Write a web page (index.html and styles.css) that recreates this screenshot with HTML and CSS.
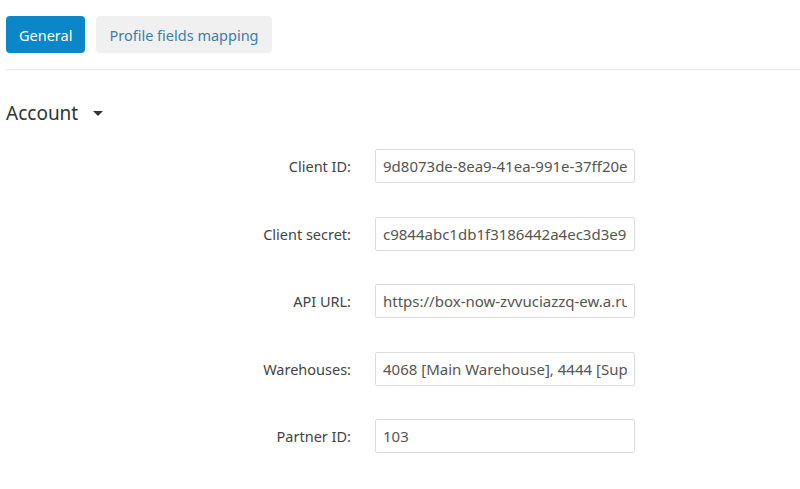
FILE: index.html
```html
<!DOCTYPE html>
<html>
<head>
<meta charset="utf-8">
<link rel="stylesheet" href="styles.css">
</head>
<body>
<div class="page">
  <div class="tabs">
    <button class="tab tab-active">General</button>
    <button class="tab">Profile fields mapping</button>
  </div>
  <div class="section-title">
    <span>Account</span>
    <span class="caret"></span>
  </div>
  <form class="form">
    <div class="row">
      <label class="label">Client ID:</label>
      <input class="input" type="text" value="9d8073de-8ea9-41ea-991e-37ff20e4b2a1">
    </div>
    <div class="row">
      <label class="label">Client secret:</label>
      <input class="input" type="text" value="c9844abc1db1f3186442a4ec3d3e95a7">
    </div>
    <div class="row">
      <label class="label">API URL:</label>
      <input class="input" type="text" value="https://box-now-zvvuciazzq-ew.a.run.app">
    </div>
    <div class="row">
      <label class="label">Warehouses:</label>
      <input class="input" type="text" value="4068 [Main Warehouse], 4444 [Support]">
    </div>
    <div class="row">
      <label class="label">Partner ID:</label>
      <input class="input" type="text" value="103">
    </div>
  </form>
</div>
</body>
</html>
```

FILE: styles.css
```css
html, body {
  margin: 0;
  padding: 0;
  background: #ffffff;
}
body {
  font-family: "Noto Sans", "Open Sans", sans-serif;
  color: #333333;
}
.page {
  padding: 16px 0 0 6px;
}
.tabs {
  display: flex;
  gap: 11px;
  padding-bottom: 16px;
  border-bottom: 1px solid #e8e8e8;
}
.tab {
  font-family: inherit;
  font-size: 14.5px;
  height: 37px;
  padding: 0 13px;
  border: none;
  border-radius: 4px;
  background: #f0f0f0;
  color: #3d7fa8;
  cursor: pointer;
}
.tab-active {
  background: #0b87c9;
  color: #ffffff;
}
.section-title {
  display: flex;
  align-items: center;
  gap: 15px;
  margin-top: 31px;
  font-size: 19px;
  color: #333;
  height: 24px;
}
.caret {
  width: 0;
  height: 0;
  border-left: 5px solid transparent;
  border-right: 5px solid transparent;
  border-top: 5px solid #333;
}
.form {
  display: flex;
  flex-direction: column;
  gap: 33.5px;
  margin-top: 24px;
}
.row {
  display: flex;
  align-items: center;
}
.label {
  width: 345px;
  text-align: right;
  font-size: 14.5px;
  color: #444;
  padding-right: 24px;
}
.input {
  width: 260px;
  height: 34px;
  box-sizing: border-box;
  border: 1px solid #dcdcdc;
  border-radius: 2px;
  padding: 0 7px;
  font-family: inherit;
  font-size: 15px;
  color: #555;
  outline: none;
}
```
